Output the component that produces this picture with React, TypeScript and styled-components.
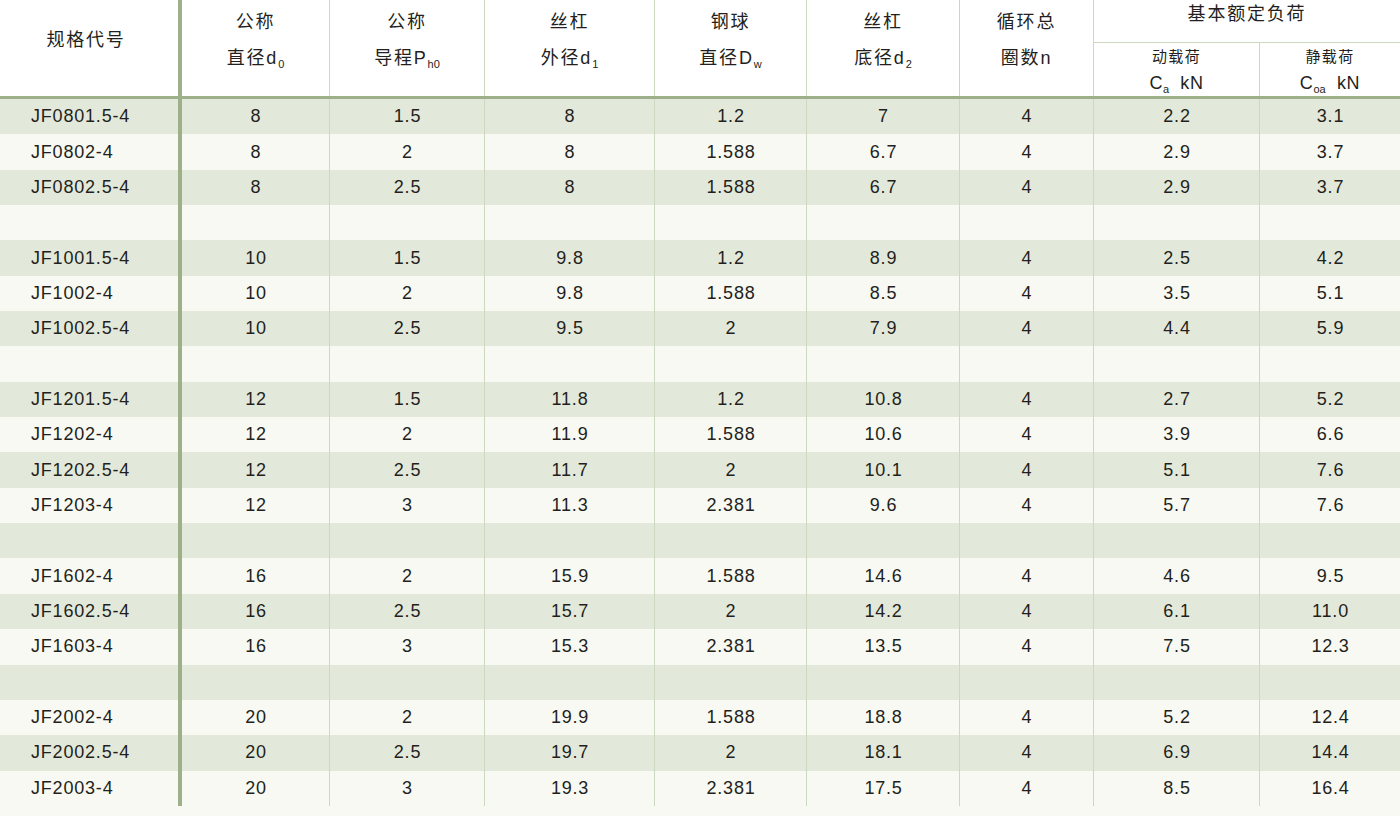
import React from 'react';
import styled, { createGlobalStyle } from 'styled-components';

const THICK = '#9db08a';
const THIN = '#cdd8c1';
const DARK = '#e3e9da';
const LIGHT = '#f7f9f2';
const INK = '#231f20';
const COLS = '178px 151px 155px 170px 152px 153px 134px 166px 141px';

const Global = createGlobalStyle`
  html, body { margin: 0; padding: 0; background: ${LIGHT}; }
  body {
    font-family: "Liberation Sans", Arial, "Noto Sans CJK SC", sans-serif;
    color: ${INK};
  }
`;

const Page = styled.div`
  width: 1400px;
`;

const Head = styled.div`
  display: grid;
  grid-template-columns: ${COLS};
  grid-template-rows: 43px 53px;
  background: #fff;
  border-bottom: 3px solid ${THICK};
`;

const Line = (col: number) =>
  col === 1 ? 'none' : col === 2 ? `4px solid ${THICK}` : `1px solid ${THIN}`;

const HeadCell = styled.div<{ $col: number; $span?: number }>`
  grid-column: ${(p) => p.$col} / span ${(p) => p.$span ?? 1};
  grid-row: 1 / span 2;
  border-left: ${(p) => Line(p.$col)};
  display: flex;
  flex-direction: column;
  align-items: center;
  padding-top: 4px;
  font-size: 18px;
  line-height: 36px;
  letter-spacing: 1.8px;
  white-space: nowrap;
`;

const CodeHead = styled(HeadCell)`
  padding-top: 22px;
  padding-right: 6px;
`;

const GroupHead = styled.div`
  grid-column: 8 / span 2;
  grid-row: 1;
  border-left: 1px solid ${THIN};
  border-bottom: 1px solid ${THIN};
  text-align: center;
  font-size: 18px;
  line-height: 28px;
  letter-spacing: 1.8px;
`;

const SubHead = styled.div<{ $col: number }>`
  grid-column: ${(p) => p.$col};
  grid-row: 2;
  border-left: 1px solid ${THIN};
  display: flex;
  flex-direction: column;
  align-items: center;
  font-size: 15px;
  line-height: 27px;
  letter-spacing: 1.4px;
  white-space: nowrap;
`;

const Unit = styled.span`
  font-size: 18px;
  letter-spacing: 0.6px;
`;

const Sub = styled.sub`
  font-size: 11px;
  line-height: 0;
  vertical-align: -4px;
  letter-spacing: 0;
`;

const Row = styled.div<{ $dark: boolean }>`
  display: grid;
  grid-template-columns: ${COLS};
  height: 35.35px;
  background: ${(p) => (p.$dark ? DARK : LIGHT)};
`;

const Cell = styled.div<{ $col: number }>`
  border-left: ${(p) => Line(p.$col)};
  display: flex;
  align-items: center;
  justify-content: ${(p) => (p.$col === 1 ? 'flex-start' : 'center')};
  padding-left: ${(p) => (p.$col === 1 ? '31px' : '1px')};
  font-size: 18px;
  letter-spacing: 0.8px;
  white-space: nowrap;
`;

type R = string[] | null;

const rows: R[] = [
  ['JF0801.5-4', '8', '1.5', '8', '1.2', '7', '4', '2.2', '3.1'],
  ['JF0802-4', '8', '2', '8', '1.588', '6.7', '4', '2.9', '3.7'],
  ['JF0802.5-4', '8', '2.5', '8', '1.588', '6.7', '4', '2.9', '3.7'],
  null,
  ['JF1001.5-4', '10', '1.5', '9.8', '1.2', '8.9', '4', '2.5', '4.2'],
  ['JF1002-4', '10', '2', '9.8', '1.588', '8.5', '4', '3.5', '5.1'],
  ['JF1002.5-4', '10', '2.5', '9.5', '2', '7.9', '4', '4.4', '5.9'],
  null,
  ['JF1201.5-4', '12', '1.5', '11.8', '1.2', '10.8', '4', '2.7', '5.2'],
  ['JF1202-4', '12', '2', '11.9', '1.588', '10.6', '4', '3.9', '6.6'],
  ['JF1202.5-4', '12', '2.5', '11.7', '2', '10.1', '4', '5.1', '7.6'],
  ['JF1203-4', '12', '3', '11.3', '2.381', '9.6', '4', '5.7', '7.6'],
  null,
  ['JF1602-4', '16', '2', '15.9', '1.588', '14.6', '4', '4.6', '9.5'],
  ['JF1602.5-4', '16', '2.5', '15.7', '2', '14.2', '4', '6.1', '11.0'],
  ['JF1603-4', '16', '3', '15.3', '2.381', '13.5', '4', '7.5', '12.3'],
  null,
  ['JF2002-4', '20', '2', '19.9', '1.588', '18.8', '4', '5.2', '12.4'],
  ['JF2002.5-4', '20', '2.5', '19.7', '2', '18.1', '4', '6.9', '14.4'],
  ['JF2003-4', '20', '3', '19.3', '2.381', '17.5', '4', '8.5', '16.4'],
];

export default function App() {
  return (
    <Page>
      <Global />
      <Head>
        <CodeHead $col={1}>规格代号</CodeHead>
        <HeadCell $col={2}>
          <span>公称</span>
          <span>直径d<Sub>0</Sub></span>
        </HeadCell>
        <HeadCell $col={3}>
          <span>公称</span>
          <span>导程P<Sub>h0</Sub></span>
        </HeadCell>
        <HeadCell $col={4}>
          <span>丝杠</span>
          <span>外径d<Sub>1</Sub></span>
        </HeadCell>
        <HeadCell $col={5}>
          <span>钢球</span>
          <span>直径D<Sub>w</Sub></span>
        </HeadCell>
        <HeadCell $col={6}>
          <span>丝杠</span>
          <span>底径d<Sub>2</Sub></span>
        </HeadCell>
        <HeadCell $col={7}>
          <span>循环总</span>
          <span>圈数n</span>
        </HeadCell>
        <GroupHead>基本额定负荷</GroupHead>
        <SubHead $col={8}>
          <span>动载荷</span>
          <Unit>C<Sub>a</Sub>&nbsp;&nbsp;kN</Unit>
        </SubHead>
        <SubHead $col={9}>
          <span>静载荷</span>
          <Unit>C<Sub>oa</Sub>&nbsp;&nbsp;kN</Unit>
        </SubHead>
      </Head>
      {rows.map((r, i) => (
        <Row key={i} $dark={i % 2 === 0}>
          {Array.from({ length: 9 }, (_, c) => (
            <Cell key={c} $col={c + 1}>
              {r ? r[c] : ''}
            </Cell>
          ))}
        </Row>
      ))}
    </Page>
  );
}
